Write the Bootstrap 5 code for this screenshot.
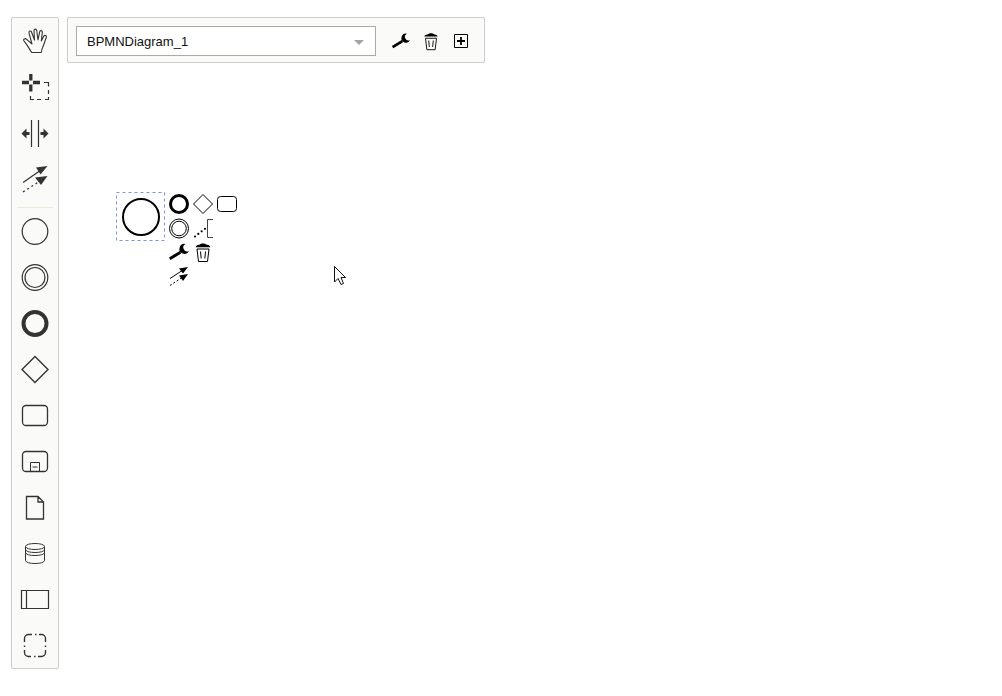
<!DOCTYPE html>
<html lang="en">
<head>
<meta charset="utf-8">
<meta name="viewport" content="width=device-width, initial-scale=1">
<title>BPMN Modeler</title>
<link href="https://cdn.jsdelivr.net/npm/bootstrap@5.3.0/dist/css/bootstrap.min.css" rel="stylesheet">
<style>
body { font-family: "Liberation Sans", Arial, sans-serif; background: #fff; }
.modeler { padding: 17px 11px; gap: 8px; }
.panel { background: #fafaf8; border: 1px solid #ccc; border-radius: 2px; }
.tool { display: block; padding: 0; border: 0; background: none; color: #333; line-height: 0; }
.tool svg, .pad-tool svg, .shape svg, .pointer svg { display: block; fill: none; stroke: currentColor; }
.divider { margin: 5px 5px 0; border-top: 1px solid #efe9dc; }
.diagram-bar { padding: 8px 8px 6px; gap: 10px; }
.diagram-select { width: 300px; height: 30px; padding: 2px 30px 0 10px; font-size: 13px; line-height: 20px; color: #111; border: 1px solid #aaa; border-radius: 0;
  background: #fff url("data:image/svg+xml,%3Csvg xmlns='http://www.w3.org/2000/svg' viewBox='0 0 10 5'%3E%3Cpath fill='%23a3a3a3' d='M0 0h10L5 5z'/%3E%3C/svg%3E") no-repeat right 11px top 13px / 10px 5px; }
.pad-tool { display: block; padding: 0; border: 0; background: none; color: #000; }
.start-event { left: 49px; top: 175px; gap: 2px; }
.shape { color: #000; }
.context-pad { display: grid; grid-template-columns: repeat(3, 24px); grid-auto-rows: 24px; }
.row-start { grid-column: 1; }
.pointer { left: 267px; top: 249px; color: #111; }
</style>
</head>
<body>
<svg width="0" height="0" class="position-absolute" aria-hidden="true">
  <defs>
    <symbol id="wrench" viewBox="0 0 24 24">
      <path d="M2.800 18.700L13.500 12.200" stroke-width="3"/>
      <path d="M18.500 4A5 5 0 1 0 22 11 3.700 3.700 0 0 1 18.500 4z" fill="currentColor" stroke="none"/>
    </symbol>
    <symbol id="trash" viewBox="0 0 24 24">
      <path d="M4.500 7.200C5.500 5 7.500 4.600 9 4.500c.5-1.300 5.500-1.300 6 0 1.500.1 3.500.5 4.500 2.700z" fill="currentColor" stroke="none"/>
      <path d="M6 9h12l-1.500 12.500h-9z M9.500 11.500l.7 7 M14.500 11.500l-.7 7" stroke-width="1"/>
    </symbol>
  </defs>
</svg>
<div class="modeler d-flex align-items-start min-vh-100">
  <nav class="panel flex-shrink-0" aria-label="Palette">
    <button class="tool" aria-label="Hand tool"><svg width="46" height="46" stroke-width="1.100" stroke-linejoin="round"><path d="M19.700 34.500h9.600c.3-2.200.5-3.500 1.400-5.200 1.400-3 2-6 3.600-9.800.7-1.800-1.700-3.200-2.600-1.200l-2.400 4.700 1-8.500c.2-2.300-2.300-2.600-2.700-.4L26 22l-1.300-9.500c-.3-2-2.900-1.800-2.700.2l.5 9.300-3-8c-.7-1.800-3-1-2.500.9L20 26l-5.300-4.700c-1.700-1.500-4 .2-2.600 1.800 3.400 3.700 5 7.800 7.600 11.400z"/></svg></button>
    <button class="tool" aria-label="Lasso tool"><svg width="46" height="46"><path d="M10 18.500h7 M21 18.500h7 M18.800 10v6.500 M18.800 20.500v7" stroke-width="3.300"/><path d="M32 18.500h4.500v4 M36.500 26v4 M36.500 33v2.500H33 M29 35.500h-4 M22 35.500h-3.500V32" stroke-width="1.200"/></svg></button>
    <button class="tool" aria-label="Space tool"><svg width="46" height="46"><path d="M19.500 10v27 M26.500 10v27" stroke-width="1.200"/><path d="M9.500 23.500l5-5v3.500h3v3h-3v3.500z M36.500 23.500l-5-5v3.500h-3v3h3v3.500z" fill="currentColor" stroke="none"/></svg></button>
    <button class="tool" aria-label="Connect tool"><svg width="46" height="46"><path d="M11 26.500L29 14" stroke-width="1.200"/><path d="M11 36L28 25" stroke-width="1.300" stroke-dasharray="2 3"/><path d="M35.500 10L24 11.500 28.500 18.500z M35.500 20L23 21.500 29 29z" fill="currentColor" stroke="none"/></svg></button>
    <div class="divider"></div>
    <button class="tool" aria-label="Start event"><svg width="46" height="46"><circle cx="23" cy="23.500" r="12.800" stroke-width="1.200"/></svg></button>
    <button class="tool" aria-label="Intermediate event"><svg width="46" height="46" stroke-width="1.200"><circle cx="23" cy="23.500" r="12.800"/><circle cx="23" cy="23.500" r="10"/></svg></button>
    <button class="tool" aria-label="End event"><svg width="46" height="46"><circle cx="23" cy="23.500" r="11.500" stroke-width="4"/></svg></button>
    <button class="tool" aria-label="Gateway"><svg width="46" height="46"><path d="M23 10.500l13 13-13 13-13-13z" stroke-width="1.400"/></svg></button>
    <button class="tool" aria-label="Task"><svg width="46" height="46"><rect x="10.500" y="13.500" width="25" height="20" rx="3.500" stroke-width="1.300"/></svg></button>
    <button class="tool" aria-label="Sub process"><svg width="46" height="46"><rect x="10.500" y="13.500" width="25" height="20" rx="3.500" stroke-width="1.300"/><path d="M18.500 33.500v-9h9v9 M20.500 29h5"/></svg></button>
    <button class="tool" aria-label="Data object"><svg width="46" height="46"><path d="M14.500 12.500h11.500l5.500 5.500v17h-17z M26 12.500v5.500h5.500" stroke-width="1.300"/></svg></button>
    <button class="tool" aria-label="Data store"><svg width="46" height="46"><path d="M13.500 16.500c0-4 19-4 19 0v14c0 4-19 4-19 0z M13.500 16.500c0 4 19 4 19 0 M13.500 19.500c0 4 19 4 19 0 M13.500 22.500c0 4 19 4 19 0"/></svg></button>
    <button class="tool" aria-label="Participant"><svg width="46" height="46"><path d="M9.500 14.500h27v18h-27z M14.500 14.500v18" stroke-width="1.200"/></svg></button>
    <button class="tool" aria-label="Group"><svg width="46" height="46" stroke-width="1.400"><path d="M12.500 20v-3.500a4 4 0 0 1 4-4H20 M27 12.500h2.500a4 4 0 0 1 4 4V20 M33.500 28v2.500a4 4 0 0 1-4 4H26 M19 34.500h-2.500a4 4 0 0 1-4-4V28 M23 12.500h1.500 M33.500 23.500V25 M22 34.500h1.500 M12.500 23.500V25"/></svg></button>
  </nav>
  <main class="flex-grow-1 position-relative">
    <div class="d-flex">
      <div class="panel diagram-bar d-flex align-items-center">
        <select class="diagram-select form-select" aria-label="Diagram"><option>BPMNDiagram_1</option></select>
        <div class="d-flex">
          <button class="pad-tool px-1" aria-label="Rename diagram"><svg width="22" height="22"><use href="#wrench"/></svg></button>
          <button class="pad-tool px-1" aria-label="Delete diagram"><svg width="22" height="22"><use href="#trash"/></svg></button>
          <button class="pad-tool px-1" aria-label="Add diagram"><svg width="22" height="22"><path d="M4.500 4.500h13v13h-13z"/><path d="M7 11h8 M11 7v8" stroke-width="1.800"/></svg></button>
        </div>
      </div>
    </div>
    <div class="start-event position-absolute d-flex">
      <div class="shape"><svg width="49" height="49"><rect x=".5" y=".5" width="48" height="48" stroke="#7d94da" stroke-dasharray="3 3"/><circle cx="25" cy="25" r="18" stroke-width="2"/></svg></div>
      <div class="context-pad">
        <button class="pad-tool" aria-label="Append end event"><svg width="24" height="24"><circle cx="12" cy="12" r="8.500" stroke-width="3"/></svg></button>
        <button class="pad-tool" aria-label="Append gateway"><svg width="24" height="24"><path d="M12 2.500l9.500 9.500-9.500 9.500L2.500 12z"/></svg></button>
        <button class="pad-tool" aria-label="Append task"><svg width="24" height="24"><rect x="2.500" y="4.500" width="19" height="15" rx="3"/></svg></button>
        <button class="pad-tool" aria-label="Append intermediate event"><svg width="24" height="24"><circle cx="12" cy="12.500" r="9.500"/><circle cx="12" cy="12.500" r="7.300"/></svg></button>
        <button class="pad-tool" aria-label="Append annotation"><svg width="24" height="24"><path d="M22 3.500h-5.500v18H22" stroke="#444"/><path d="M4 20.500L15 12" stroke-width="2.200" stroke-linecap="round" stroke-dasharray="0 4.200"/></svg></button>
        <button class="pad-tool row-start" aria-label="Change type"><svg width="24" height="24"><use href="#wrench"/></svg></button>
        <button class="pad-tool" aria-label="Remove"><svg width="24" height="24"><use href="#trash"/></svg></button>
        <button class="pad-tool row-start" aria-label="Connect"><svg width="24" height="24"><path d="M3 14.500L16 6"/><path d="M3 21.500L16 13" stroke-dasharray="2 2"/><path d="M21 3l-9 1.500 4 5z M21 10l-9 1.500 4 5.500z" fill="currentColor" stroke="none"/></svg></button>
      </div>
    </div>
    <div class="pointer position-absolute"><svg width="13" height="21"><path d="M.5.500v15.500l3.500-3.500 3 6 2.500-1-2.500-6h4.500z" fill="#fff"/></svg></div>
  </main>
</div>
<script src="https://cdn.jsdelivr.net/npm/bootstrap@5.3.0/dist/js/bootstrap.bundle.min.js"></script>
</body>
</html>
